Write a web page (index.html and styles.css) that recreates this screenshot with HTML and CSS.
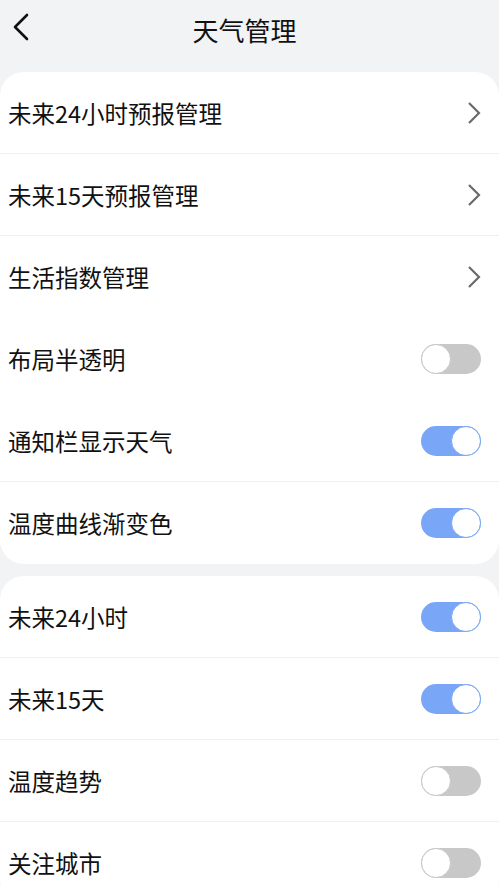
FILE: index.html
```html
<!DOCTYPE html>
<html lang="zh-CN">
<head>
  <meta charset="UTF-8">
  <meta name="viewport" content="width=device-width, initial-scale=1.0">
  <title>天气管理</title>
  <link rel="stylesheet" href="styles.css">
</head>
<body>
  <div class="header">
    <button class="back-button">
      <svg width="18" height="28" viewBox="0 0 18 28"><path d="M15 2 L3 14 L15 26" fill="none" stroke="#111" stroke-width="2.6" stroke-linecap="round" stroke-linejoin="round"/></svg>
    </button>
    <h2>天气管理</h2>
  </div>

  <div class="card">
    <div class="row line"><span>未来24小时预报管理</span><span class="arrow"><svg width="14" height="24" viewBox="0 0 14 24"><path d="M2 2 L12 12 L2 22" fill="none" stroke="#6b6b6b" stroke-width="2.2"/></svg></span></div>
    <div class="row line"><span>未来15天预报管理</span><span class="arrow"><svg width="14" height="24" viewBox="0 0 14 24"><path d="M2 2 L12 12 L2 22" fill="none" stroke="#6b6b6b" stroke-width="2.2"/></svg></span></div>
    <div class="row"><span>生活指数管理</span><span class="arrow"><svg width="14" height="24" viewBox="0 0 14 24"><path d="M2 2 L12 12 L2 22" fill="none" stroke="#6b6b6b" stroke-width="2.2"/></svg></span></div>
    <div class="row"><span>布局半透明</span><span class="switch"></span></div>
    <div class="row line"><span>通知栏显示天气</span><span class="switch on"></span></div>
    <div class="row"><span>温度曲线渐变色</span><span class="switch on"></span></div>
  </div>

  <div class="card">
    <div class="row line"><span>未来24小时</span><span class="switch on"></span></div>
    <div class="row line"><span>未来15天</span><span class="switch on"></span></div>
    <div class="row line"><span>温度趋势</span><span class="switch"></span></div>
    <div class="row"><span>关注城市</span><span class="switch"></span></div>
  </div>
</body>
</html>
```

FILE: styles.css
```css
body {
  font-family: "Noto Sans CJK SC", Roboto, sans-serif;
  background-color: #f2f3f5;
  margin: 0;
  color: #111;
}
.header {
  height: 60px;
  display: flex;
  align-items: center;
  justify-content: center;
  position: relative;
}
.header h2 {
  margin: 0 10px 2px 0;
  font-size: 26px;
  font-weight: 400;
}
.back-button {
  position: absolute;
  left: 12px;
  top: 13px;
  background: none;
  border: none;
  padding: 0;
}
.card {
  background-color: #fff;
  border-radius: 24px;
  margin-top: 12px;
}
.row {
  height: 82px;
  display: flex;
  align-items: center;
  justify-content: space-between;
  padding: 0 18px 0 8px;
  font-size: 23.5px;
}
.line {
  border-bottom: 1px solid #f0f0f0;
  height: 81px;
}
.arrow {
  display: flex;
}
.switch {
  width: 60px;
  height: 30px;
  border-radius: 15px;
  background-color: #c8c8c8;
  position: relative;
  box-sizing: border-box;
}
.switch::after {
  content: "";
  position: absolute;
  top: 0;
  left: 0;
  width: 30px;
  height: 30px;
  border-radius: 50%;
  background-color: #fff;
  border: 1.5px solid #c8c8c8;
  box-sizing: border-box;
}
.switch.on {
  background-color: #79a6f7;
}
.switch.on::after {
  left: 30px;
  border-color: #79a6f7;
}
```
